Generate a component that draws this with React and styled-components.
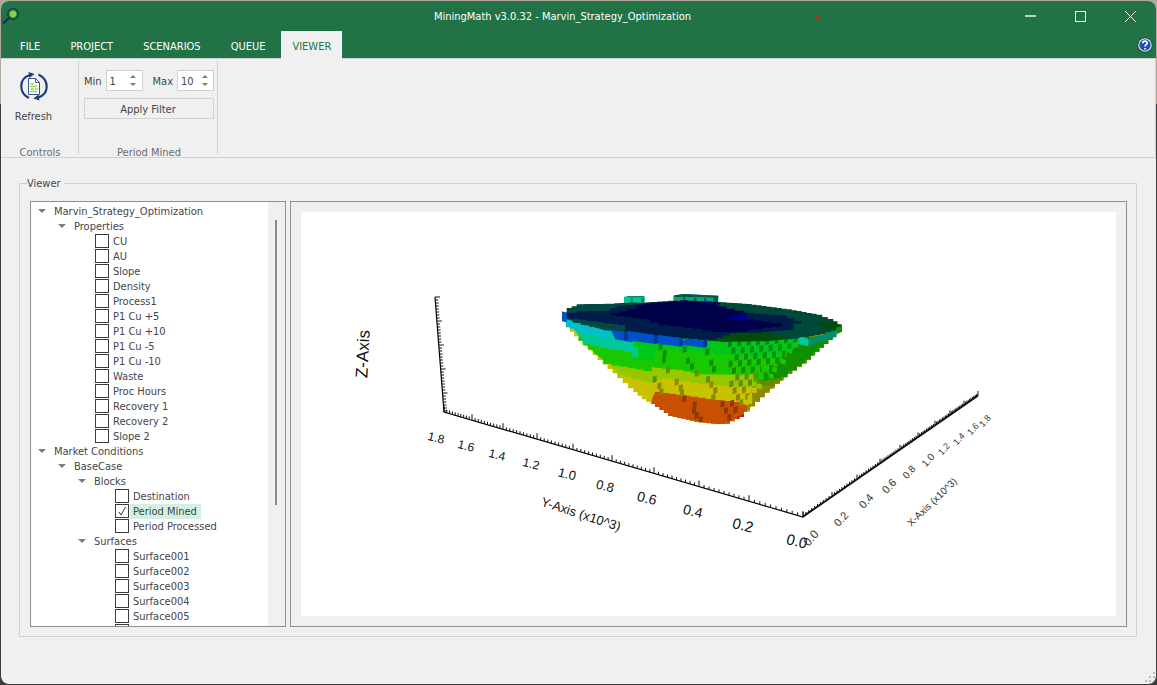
import React, { useState } from "react";
import styled, { createGlobalStyle } from "styled-components";

const GlobalStyle = createGlobalStyle`
  *, *::before, *::after { box-sizing: border-box; }
  body {
    margin: 0;
    background: linear-gradient(#b3a79c 0 104px, #3c3c3e 104px);
    font: 11px/15px "DejaVu Sans Condensed", "DejaVu Sans", sans-serif;
    color: #44444c;
  }
  button, input { font: inherit; color: inherit; }
`;

const Window = styled.div`
  height: 100vh;
  min-height: 480px;
  display: flex;
  flex-direction: column;
  padding: 1px;
`;

const Frame = styled.div`
  position: relative;
  flex: 1;
  min-height: 0;
  display: flex;
  flex-direction: column;
  background: #f0f0f0;
  border-radius: 8px;
  overflow: hidden;
`;

const Header = styled.header`
  background: #217346;
  color: #fff;
`;

const TitleBar = styled.div`
  display: grid;
  grid-template-columns: 150px 1fr 150px;
  align-items: center;
  height: 30px;
  padding-left: 2px;
`;

const Title = styled.h1`
  margin: 0;
  font-size: 11px;
  font-weight: 400;
  text-align: center;
  padding: 1px 34px 0 0;
`;

const WindowButtons = styled.div`
  display: flex;
  margin-left: -1px;
`;

const WindowButton = styled.button`
  flex: 0 0 50px;
  height: 28px;
  padding: 0;
  border: 0;
  background: none;
  display: grid;
  place-items: center;
`;

const RecordDot = styled.span`
  position: absolute;
  left: 815px;
  top: 15px;
  width: 4px;
  height: 4px;
  border-radius: 50%;
  background: #e01b1b;
`;

const MenuRow = styled.div`
  display: flex;
  justify-content: space-between;
  align-items: center;
  height: 27px;
  padding: 0 3px 0 0;
`;

const Tabs = styled.nav`
  display: flex;
  align-self: stretch;
  padding-left: 4px;
`;

const Tab = styled.button`
  border: 0;
  padding: ${(p) => (p.$active ? "2px 11px 0" : "3px 15px 0")};
  margin-bottom: ${(p) => (p.$active ? -1 : 0)}px;
  margin-left: ${(p) => (p.$active ? 1 : 0)}px;
  position: relative;
  z-index: 1;
  background: ${(p) => (p.$active ? "#f0f0f0" : "none")};
  color: ${(p) => (p.$active ? "#217346" : "#fff")};
`;

const HelpButton = styled.button`
  border: 0;
  padding: 0;
  width: 16px;
  height: 16px;
  background: none;
`;

const Ribbon = styled.section`
  display: flex;
  height: 100px;
  padding: 2px 0 3px;
  border: 1px solid #d2d2d2;
  border-left: 0;
`;

const Group = styled.div`
  display: flex;
  flex-direction: column;
  justify-content: space-between;
  width: ${(p) => p.$width}px;
  padding: ${(p) => p.$pad};
  border-right: 1px solid #d2d2d2;
`;

const GroupName = styled.div`
  text-align: center;
  color: #6c6c72;
  height: 9px;
`;

const RefreshButton = styled.button`
  align-self: flex-start;
  width: 63px;
  padding: 0;
  border: 0;
  background: none;
  display: flex;
  flex-direction: column;
  align-items: center;
  gap: 8px;
`;

const FilterForm = styled.div`
  display: flex;
  flex-direction: column;
  gap: 7px;
`;

const FilterRow = styled.div`
  display: flex;
  justify-content: space-between;
`;

const Field = styled.div`
  display: flex;
  align-items: center;
  gap: 4px;
`;

const FieldLabel = styled.label`
  padding-top: 2px;
`;

const Spin = styled.div`
  display: flex;
  width: 37px;
  height: 21px;
  border: 1px solid #cfcfcf;
  background: #fff;
`;

const SpinInput = styled.input`
  width: 18px;
  padding: 1px 0 0 3px;
  border: 0;
  background: none;
  outline: 0;
`;

const SpinArrows = styled.div`
  flex: 1;
  display: flex;
  flex-direction: column;
  padding: 1px 0;
`;

const SpinArrow = styled.button`
  flex: 1;
  border: 0;
  padding: 0;
  background: none;
  display: grid;
  place-items: center;
`;

const ApplyButton = styled.button`
  height: 21px;
  padding: 1px 2px 0 0;
  border: 1px solid #d2d2d2;
  background: #f0f0f0;
`;

const Main = styled.main`
  flex: 1;
  min-height: 0;
  display: flex;
  padding: 18px 19px 47px 18px;
`;

const ViewerBox = styled.fieldset`
  flex: 1;
  min-width: 0;
  min-height: 0;
  margin: 0;
  padding: 10px 9px 9px 10px;
  border: 1px solid #d2d2d2;
  display: flex;
  gap: 4px;
`;

const Legend = styled.legend`
  margin-left: -3px;
  padding: 0 3px 0 0;
`;

const TreePanel = styled.div`
  flex: 0 0 256px;
  min-height: 0;
  display: flex;
  border: 1px solid #8f8f8f;
`;

const Tree = styled.ul`
  flex: 1;
  margin: 0;
  padding: 2px 0 0 3px;
  list-style: none;
  background: #fff;
  overflow: hidden;
  height: 100%;
`;

const ScrollTrack = styled.div`
  width: 17px;
  padding: 18px 7px 121px;
  display: flex;
`;

const ScrollThumb = styled.div`
  flex: 1;
  max-width: 2px;
  background: #8a8a8a;
`;

const Row = styled.li`
  display: flex;
  align-items: center;
  height: 15px;
  padding-left: ${(p) => p.$depth * 20}px;
`;

const Toggle = styled.button`
  width: 20px;
  height: 15px;
  padding: 0 0 1px 4px;
  border: 0;
  background: none;
  display: flex;
  align-items: center;
`;

const Check = styled.input`
  appearance: none;
  margin: 0;
  flex: 0 0 14px;
  height: 14px;
  border: 1px solid #3c3c3c;
  background: #fff;
  &:checked {
    background: no-repeat center / 10px 10px
      url("data:image/svg+xml,%3Csvg xmlns='http://www.w3.org/2000/svg' viewBox='0 0 10 10'%3E%3Cpath d='M2 6l2 3L8.500 1' fill='none' stroke='%23333'/%3E%3C/svg%3E");
  }
`;

const CheckLabel = styled.label`
  display: flex;
  align-items: flex-start;
  gap: 1px;
  height: 15px;
  padding-left: 21px;
`;

const ItemText = styled.span`
  padding: 0 4px 0 3px;
  background: ${(p) => (p.$selected ? "#d3f0e0" : "none")};
`;

const PlotPanel = styled.div`
  flex: 1;
  min-width: 0;
  display: flex;
  padding: 10px;
  border: 1px solid #8f8f8f;
`;

const Plot = styled.svg`
  flex: 1;
  min-width: 0;
  min-height: 0;
  width: 100%;
  height: 100%;
  background: #fff;
`;

const AxisText = styled.text`
  font-family: "Liberation Sans", sans-serif;
  font-size: ${(p) => p.$size}px;
  fill: ${(p) => p.$tone || "#111"};
  text-anchor: middle;
  dominant-baseline: central;
`;

const SizeGrip = styled.svg`
  position: absolute;
  right: 0;
  bottom: 1px;
`;

/* ---------- icons ---------- */

const AppIcon = () => (
  <svg width="18" height="18" viewBox="0 0 18 18">
    <circle cx="10" cy="7" r="5.300" fill="none" stroke="#123c52" strokeWidth="1.300" />
    <path d="M6 11L0 16.500" stroke="#0e2e5c" strokeWidth="2.200" />
    <path d="M10 3.300l3.300 1.800v3.800L10 10.700 6.700 8.900V5.100z" fill="#8ed03c" />
  </svg>
);

const RefreshIcon = () => (
  <svg width="28" height="30" viewBox="0 0 28 30">
    <g fill="none" stroke="#213f73" strokeWidth="2.200">
      <path d="M9 27C-1.500 21.500-1.500 7.500 10 4" />
      <path d="M18.500 3.500C29.500 9 29.500 23 18 26.500" />
    </g>
    <path d="M8.500 1l6 2-5 4z" fill="#213f73" />
    <path d="M19.500 29.500l-6-2 5-4z" fill="#213f73" />
    <path d="M8.500 7.500h7l4 4v12h-11z" fill="#fff" stroke="#34568b" />
    <path d="M15.500 7.500v4h4" fill="none" stroke="#34568b" />
    <path d="M10 13h4M10 15.500h7M11 18h3M15 18h3M10 20.500h7" stroke="#9ed84e" strokeWidth="1.500" />
  </svg>
);

const HelpIcon = () => (
  <svg width="16" height="16" viewBox="0 0 16 16">
    <circle cx="8" cy="8" r="7.500" fill="#123a2a" />
    <circle cx="8" cy="8" r="6.800" fill="#e8eefb" />
    <circle cx="8" cy="8" r="5.700" fill="#1f50b5" />
    <path d="M5.700 6.200c.2-3 4.800-2.600 4.500 0-.1 1.500-2.200 1.500-2.200 3.300M8 11v1.500" fill="none" stroke="#fff" strokeWidth="1.700" />
  </svg>
);

const Triangle = ({ up, size = 8, color = "#7c7c7c" }) => (
  <svg width={size} height={size / 2} viewBox="0 0 8 4">
    <path d={up ? "M0 4h8L4 0z" : "M0 0h8L4 4z"} fill={color} />
  </svg>
);

/* ---------- block model ---------- */

const pts = (list) => list.map((p) => p.join(",")).join(" ");

/* Replaces each slanted edge by block-sized stairs. */
const stairs = (list, size = 13) => {
  const out = [list[0]];
  for (let i = 1; i < list.length; i++) {
    const [x0, y0] = list[i - 1];
    const [x1, y1] = list[i];
    const n = Math.max(1, Math.round(Math.abs(x1 - x0) / size));
    for (let k = 1; k <= n; k++) {
      const x = x0 + ((x1 - x0) * k) / n;
      const y = y0 + ((y1 - y0) * k) / n;
      out.push([x, out[out.length - 1][1]], [x, y]);
    }
  }
  return out;
};

const SILHOUETTE = stairs([
  [78, 110], [500, 150], [775, 170], [890, 150], [878, 180], [838, 215], [800, 250], [742, 292], [720, 312],
  [660, 365], [630, 395], [612, 410], [570, 431], [538, 433], [475, 425], [398, 408], [345, 372],
  [318, 358], [280, 325], [232, 280], [188, 240], [128, 182], [90, 142], [78, 138],
], 14);

const BANDS = [
  { light: "#c8c200", dark: "#8c8800", shape: [[60, 60], [960, 60], [960, 450], [60, 450]] },
  { light: "#c85000", dark: "#8c3800", shape: [[345, 336], [430, 347], [520, 360], [575, 366], [622, 378], [622, 440], [300, 440], [335, 360]] },
  { light: "#96c800", dark: "#648c00", shape: [[200, 240], [960, 240], [745, 292], [705, 318], [640, 322], [575, 318], [500, 312], [430, 302], [390, 295], [340, 308], [232, 280]] },
  { light: "#18c800", dark: "#109000", shape: [[100, 170], [920, 170], [820, 240], [745, 292], [660, 306], [640, 284], [580, 284], [500, 283], [430, 270], [345, 262], [335, 273], [215, 252], [190, 240]] },
  { light: "#00c818", dark: "#008c18", shape: [[270, 170], [790, 175], [770, 215], [700, 225], [640, 232], [570, 222], [500, 218], [400, 208], [370, 210], [345, 240], [296, 232], [290, 205]] },
  { light: "#00c896", dark: "#009068", shape: [[90, 130], [280, 165], [282, 202], [296, 205], [294, 232], [276, 230], [274, 215], [200, 203], [128, 184]] },
  { light: "#00c0c8", dark: "#008c90", shape: [[78, 105], [212, 140], [210, 176], [196, 172], [80, 140]] },
];

const insidePoly = (x, y, poly) => {
  let hit = false;
  for (let i = 0, j = poly.length - 1; i < poly.length; j = i++) {
    const [xi, yi] = poly[i];
    const [xj, yj] = poly[j];
    if (yi > y !== yj > y && x < ((xj - xi) * (y - yi)) / (yj - yi) + xi) hit = !hit;
  }
  return hit;
};

const bandAt = (x, y) => [...BANDS].reverse().find((b) => insidePoly(x, y, b.shape)) || BANDS[0];

const FACES = [
  [356, 192], [368, 212], [366, 232], [378, 262], [338, 290], [352, 310], [358, 328],
  [428, 200], [438, 235], [450, 252], [464, 272], [404, 298], [416, 316], [420, 330],
  [496, 208], [508, 240], [516, 260], [498, 290], [508, 306], [520, 324], [514, 345],
  [427, 348], [458, 366], [456, 384], [464, 398], [476, 412],
];

const EDGE_FACES = [];
for (let row = 0; row < 12; row++) {
  const y = 184 + row * 20;
  const start = 564 + ((row * 10) % 28);
  const end = 762 - row * 14;
  for (let x = start, k = 0; x < end; x += 28, k++) {
    EDGE_FACES.push([x - (row > 8 ? 28 : 0), y - k * 2]);
  }
}

const STRAY_LIGHTS = [
  [712, 212], [742, 204], [690, 234], [722, 236], [664, 256], [696, 260], [656, 282], [686, 280],
  [634, 322], [650, 310], [622, 345], [610, 358],
];

const RIGHT_SIDE = stairs([
  [775, 170], [900, 150], [900, 200], [740, 300], [620, 400], [612, 440], [600, 440],
  [622, 372], [650, 305], [700, 260], [740, 215], [775, 196],
], 14);

const Face = ({ x, y }) => (
  <polygon points={pts([[x, y], [x + 12, y - 3], [x + 12, y + 15], [x, y + 19]])} fill={bandAt(x, y + 8).dark} />
);

const Pit = () => (
  <g transform="translate(540 280) scale(0.33333)">
    <clipPath id="body"><polygon points={pts(SILHOUETTE)} /></clipPath>
    <clipPath id="right"><polygon points={pts(RIGHT_SIDE)} /></clipPath>
    <g clipPath="url(#body)">
      {BANDS.map((b) => <polygon key={b.light} points={pts(stairs(b.shape, 24))} fill={b.light} />)}
      <g clipPath="url(#right)">
        {BANDS.filter((b) => b.light !== "#c85000").map((b) => (
          <polygon key={b.dark} points={pts(stairs(b.shape, 24))} fill={b.dark} />
        ))}
      </g>
      {FACES.map(([x, y]) => <Face key={`${x}-${y}`} x={x} y={y} />)}
      {EDGE_FACES.map(([x, y]) => <Face key={`${x}-${y}`} x={x} y={y} />)}
      {STRAY_LIGHTS.map(([x, y]) => (
        <polygon key={`${x}-${y}`} points={pts([[x, y], [x + 15, y + 3], [x + 15, y + 18], [x, y + 15]])} fill={bandAt(x, y + 8).light} />
      ))}
      <path d="M592 410l20-6v14h-20z" fill="#c80000" />
    </g>
    <path d="M252 50l18-3 20 4 8-4 16 2v18l-30 2-32-1z" fill="#00c896" />
    <path d="M262 48h48l3 4h-50zM272 53h6v16h-6zM304 53h9v14h-9z" fill="#008868" />
    <path d="M400 47l30-5 105 5v20l-60 2-75-9z" fill="#00a87c" />
    <path d="M402 46l30-4 103 5v6l-60-2-70 0zM430 52h6v8h-6zM462 54h8v8h-8zM492 55h7v8h-7zM520 53h14v14h-14z" fill="#005844" />
    <polygon fill="#004838" points={pts(stairs([[66, 98], [80, 84], [110, 73], [210, 71], [250, 68], [320, 67], [400, 61], [530, 66], [620, 72], [740, 88], [830, 104], [880, 124], [905, 142], [890, 155], [790, 175], [680, 184], [560, 184], [500, 180], [345, 166], [215, 152], [80, 120], [66, 98]], 16))} />
    <polygon fill="#004848" points={pts(stairs([[72, 98], [84, 88], [130, 73], [215, 73], [240, 92], [90, 110], [240, 130], [260, 150], [210, 152], [80, 120]], 22))} />
    <polygon fill="#001c48" points={pts(stairs([[76, 98], [110, 94], [190, 92], [230, 78], [330, 67], [520, 68], [560, 90], [640, 102], [720, 106], [784, 132], [760, 150], [640, 160], [590, 160], [530, 180], [500, 180], [345, 167], [235, 154], [255, 135], [170, 124], [90, 114], [76, 98]], 24))} />
    <polygon fill="#000048" points={pts(stairs([[212, 100], [262, 88], [290, 74], [420, 61], [515, 67], [530, 80], [610, 98], [620, 118], [690, 128], [725, 140], [640, 150], [620, 156], [540, 156], [460, 143], [385, 135], [330, 118], [230, 106], [212, 100]], 26))} />
    <path d="M558 116l22-5v-6h18v-7l24 7v18zM492 66l22-2 6 10-18-2z" fill="#000090" />
    <polygon fill="#004c08" points={pts(stairs([[504, 180], [530, 176], [550, 168], [590, 158], [680, 158], [700, 168], [762, 174], [690, 182], [560, 186], [504, 180]], 20))} />
    <path d="M828 132l22-5 24 3v-7l18 8 14 8-8 14-22-6-18-3z" fill="#004c08" />
    <path d="M888 143l18-4v16l-16 8z" fill="#109000" />
    <path d="M78 118l20 4v6l24 2v6l26 1v6l30 2v5l34 2v24l-16-4-30-4v-6l-36-4v-6l-28-4v-5l-24-3z" fill="#00c0c8" />
    <path d="M66 94l14 5v28l-14-3zM213 150l38 4v5l12-6 78 11 4 5 12-4 62 8 10 8 13-5 55 6 3 22-70-9-4 5-68-8-4-4-4 5-69-10-6 4-49-9z" fill="#0050c8" />
    <path d="M252 158l12-4v24l-12 5zM342 168l12-4v24l-12 5zM418 178l10-4v22l-10 4zM490 180l12-3v22l-12 4z" fill="#00389a" />
    <path d="M775 174l13-4 18 7v22l-31-6z" fill="#00c896" />
    <path d="M806 176l14-6 26-4 14-7 30-9v21l-16 3-12 8-28 4-12 8-16 4z" fill="#009068" />
  </g>
);

/* ---------- axes ---------- */

const ORIGIN = [803, 517];
const Y_TICKS = [803, 749, 699, 654, 612, 573, 537, 503, 472, 444];
const X_TICKS = [803, 832, 857, 880, 900, 918, 935, 950, 964, 978];
const onY = (x) => 412 + ((x - 444) * 105) / 359;
const onX = (x) => 517 - ((x - 803) * 121) / 175;

const buildTicks = (majors, yOf, count, long, short) =>
  majors.flatMap((x, i) => {
    const major = `M${x} ${yOf(x)}v${-long}`;
    if (i === majors.length - 1) return [major];
    const next = majors[i + 1];
    return [major, ...Array.from({ length: count - 1 }, (_, k) => {
      const t = x + ((next - x) * (k + 1)) / count;
      return `M${t.toFixed(1)} ${yOf(t).toFixed(1)}v${-short}`;
    })];
  }).join("");

const zTicks = Array.from({ length: 39 }, (_, i) => {
  const y = 297 + i * 3;
  return `M${(435 + ((y - 297) * 9) / 115).toFixed(1)} ${y}h${i % 8 === 0 ? 5 : 3}`;
}).join("");

const Y_LABELS = [
  ["1.8", 436, 438, 12], ["1.6", 466, 446, 12], ["1.4", 497, 455, 12], ["1.2", 531, 464, 12], ["1.0", 567, 474, 13],
  ["0.8", 605, 486, 13], ["0.6", 647, 498, 14], ["0.4", 693, 511, 14], ["0.2", 743, 525, 15], ["0.0", 797, 541, 15],
];
const X_LABELS = [
  ["0.0", 811, 538, 12], ["0.2", 841, 519, 11], ["0.4", 866, 501, 11], ["0.6", 889, 486, 11], ["0.8", 909, 472, 10],
  ["1.0", 928, 460, 10], ["1.2", 944, 449, 9], ["1.4", 959, 439, 9], ["1.6", 973, 429, 9], ["1.8", 985, 421, 9],
];

const Label = ({ x, y, angle, ...rest }) => (
  <AxisText transform={`translate(${x} ${y}) rotate(${angle})`} {...rest} />
);

const Axes = () => (
  <g>
    <path d={`M435 297L444 412L${ORIGIN.join(" ")}L978 396`} fill="none" stroke="#000" strokeWidth="1.200" />
    <path d="M803 516L978 395" stroke="#000" />
    <path d={buildTicks(Y_TICKS, onY, 10, 6, 3)} stroke="#111" />
    <path d={buildTicks(X_TICKS, onX, 10, 5, 3)} stroke="#111" />
    <path d={zTicks} stroke="#111" />
    {Y_LABELS.map(([t, x, y, s]) => <Label key={t} x={x} y={y} angle={14} $size={s}>{t}</Label>)}
    {X_LABELS.map(([t, x, y, s]) => <Label key={t} x={x} y={y} angle={-48} $size={s} $tone="#333">{t}</Label>)}
    <Label x={581} y={514} angle={18} $size={13}>Y-Axis (x10^3)</Label>
    <Label x={932} y={502} angle={-44} $size={10} $tone="#333">X-Axis (x10^3)</Label>
    <Label x={363} y={354} angle={-87} $size={17}>Z-Axis</Label>
  </g>
);

/* ---------- page ---------- */

const TABS = ["FILE", "PROJECT", "SCENARIOS", "QUEUE", "VIEWER"];

const branch = (depth, name) => ({ depth, name, branch: true });
const leaves = (depth, names) => names.map((name) => ({ depth, name }));

const ITEMS = [
  branch(0, "Marvin_Strategy_Optimization"),
  branch(1, "Properties"),
  ...leaves(2, ["CU", "AU", "Slope", "Density", "Process1", "P1 Cu +5", "P1 Cu +10", "P1 Cu -5", "P1 Cu -10", "Waste", "Proc Hours", "Recovery 1", "Recovery 2", "Slope 2"]),
  branch(0, "Market Conditions"),
  branch(1, "BaseCase"),
  branch(2, "Blocks"),
  ...leaves(3, ["Destination", "Period Mined", "Period Processed"]),
  branch(2, "Surfaces"),
  ...leaves(3, ["Surface001", "Surface002", "Surface003", "Surface004", "Surface005", ""]),
];

const SpinBox = ({ id, label, initial }) => {
  const [value, setValue] = useState(initial);
  return (
    <Field>
      <FieldLabel htmlFor={id}>{label}</FieldLabel>
      <Spin>
        <SpinInput id={id} type="text" inputMode="numeric" value={value} onChange={(e) => setValue(Number(e.target.value) || 0)} />
        <SpinArrows>
          <SpinArrow aria-label="Increase" onClick={() => setValue(value + 1)}><Triangle up size={6} /></SpinArrow>
          <SpinArrow aria-label="Decrease" onClick={() => setValue(value - 1)}><Triangle size={6} /></SpinArrow>
        </SpinArrows>
      </Spin>
    </Field>
  );
};

export default function App() {
  const [checked, setChecked] = useState({ "Period Mined": true });
  return (
    <Window>
      <GlobalStyle />
      <Frame>
        <Header>
          <TitleBar>
            <AppIcon />
            <Title>MiningMath v3.0.32 - Marvin_Strategy_Optimization</Title>
            <WindowButtons>
              <WindowButton aria-label="Minimize"><svg width="11" height="11"><path d="M0 5h11" stroke="#b7d6c5" strokeWidth="2" /></svg></WindowButton>
              <WindowButton aria-label="Maximize"><svg width="11" height="11"><path d="M.5.5h10v10H.5z" fill="none" stroke="#fff" /></svg></WindowButton>
              <WindowButton aria-label="Close"><svg width="11" height="11"><path d="M0 0l11 11M11 0L0 11" stroke="#fff" /></svg></WindowButton>
            </WindowButtons>
          </TitleBar>
          <MenuRow>
            <Tabs>{TABS.map((t) => <Tab key={t} $active={t === "VIEWER"}>{t}</Tab>)}</Tabs>
            <HelpButton aria-label="Help"><HelpIcon /></HelpButton>
          </MenuRow>
          <RecordDot />
        </Header>
        <Ribbon>
          <Group $width={78} $pad="10px 0 0 1px">
            <RefreshButton><RefreshIcon />Refresh</RefreshButton>
            <GroupName>Controls</GroupName>
          </Group>
          <Group $width={139} $pad="9px 3px 0 5px">
            <FilterForm>
              <FilterRow>
                <SpinBox id="min" label="Min" initial={1} />
                <SpinBox id="max" label="Max" initial={10} />
              </FilterRow>
              <ApplyButton>Apply Filter</ApplyButton>
            </FilterForm>
            <GroupName>Period Mined</GroupName>
          </Group>
        </Ribbon>
        <Main>
          <ViewerBox>
            <Legend>Viewer</Legend>
            <TreePanel>
              <Tree>
                {ITEMS.map((item) => (
                  <Row key={item.name} $depth={item.depth}>
                    {item.branch ? (
                      <>
                        <Toggle aria-label={`Collapse ${item.name}`}><Triangle /></Toggle>
                        <span>{item.name}</span>
                      </>
                    ) : (
                      <CheckLabel>
                        <Check
                          type="checkbox"
                          checked={!!checked[item.name]}
                          onChange={(e) => setChecked({ ...checked, [item.name]: e.target.checked })}
                        />
                        <ItemText $selected={item.name === "Period Mined"}>{item.name}</ItemText>
                      </CheckLabel>
                    )}
                  </Row>
                ))}
              </Tree>
              <ScrollTrack><ScrollThumb /></ScrollTrack>
            </TreePanel>
            <PlotPanel>
              <Plot viewBox="301 212 815 404" role="img" aria-label="Block model plot">
                <Pit />
                <Axes />
              </Plot>
            </PlotPanel>
          </ViewerBox>
        </Main>
        <SizeGrip width="11" height="11" fill="#bdbdbd">
          <path d="M8 0h2v2H8zM4 4h2v2H4zM8 4h2v2H8zM0 8h2v2H0zM4 8h2v2H4z" />
        </SizeGrip>
      </Frame>
    </Window>
  );
}
